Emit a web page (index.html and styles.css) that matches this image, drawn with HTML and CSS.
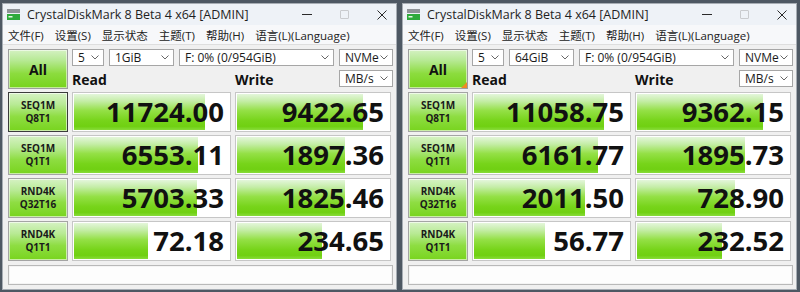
FILE: index.html
```html
<!DOCTYPE html>
<html>
<head>
<meta charset="utf-8">
<link rel="stylesheet" href="styles.css">
</head>
<body>
<div class="desktop">
  <div class="win">
    <div class="titlebar">
      <svg class="appicon" width="13" height="11" viewBox="0 0 13 11"><rect x="0" y="0" width="13" height="4" fill="#8f9398"/><rect x="0" y="5" width="13" height="6" fill="#2faa3c"/><rect x="1.5" y="7" width="4" height="1.5" fill="#e8f5e8"/></svg>
      <span class="title">CrystalDiskMark 8 Beta 4 x64 [ADMIN]</span>
      <div class="caption">
        <span class="cap-min"></span>
        <span class="cap-max"></span>
        <svg class="cap-close" width="10" height="10" viewBox="0 0 10 10"><path d="M0.5 0.5 L9.5 9.5 M9.5 0.5 L0.5 9.5" stroke="#2a2a2a" stroke-width="1"/></svg>
      </div>
    </div>
    <div class="menubar">
      <span>文件(F)</span><span>设置(S)</span><span>显示状态</span><span>主题(T)</span><span>帮助(H)</span><span>语言(L)(Language)</span>
    </div>
    <div class="content">
      <div class="head">
        <div class="all">All</div>
        <div class="controls">
          <div class="row1">
            <div class="sel w-cnt"><span>5</span><svg class="chev" width="8" height="5" viewBox="0 0 8 5"><path d="M0.5 0.5 L4 4 L7.5 0.5" fill="none" stroke="#666"/></svg></div>
            <div class="sel w-size"><span>1GiB</span><svg class="chev" width="8" height="5" viewBox="0 0 8 5"><path d="M0.5 0.5 L4 4 L7.5 0.5" fill="none" stroke="#666"/></svg></div>
            <div class="sel w-drive"><span>F: 0% (0/954GiB)</span><svg class="chev" width="8" height="5" viewBox="0 0 8 5"><path d="M0.5 0.5 L4 4 L7.5 0.5" fill="none" stroke="#666"/></svg></div>
            <div class="sel w-mode"><span>NVMe</span><svg class="chev" width="8" height="5" viewBox="0 0 8 5"><path d="M0.5 0.5 L4 4 L7.5 0.5" fill="none" stroke="#666"/></svg></div>
          </div>
          <div class="row2">
            <span class="lbl-read">Read</span>
            <span class="lbl-write">Write</span>
            <div class="sel w-mode"><span>MB/s</span><svg class="chev" width="8" height="5" viewBox="0 0 8 5"><path d="M0.5 0.5 L4 4 L7.5 0.5" fill="none" stroke="#666"/></svg></div>
          </div>
        </div>
      </div>
      <div class="trow">
        <div class="tbtn focus"><span>SEQ1M</span><span>Q8T1</span></div>
        <div class="cell"><div class="fill" style="width:84.49%"></div><div class="num">11724.00</div></div>
        <div class="cell"><div class="fill" style="width:82.90%"></div><div class="num">9422.65</div></div>
      </div>
      <div class="trow">
        <div class="tbtn"><span>SEQ1M</span><span>Q1T1</span></div>
        <div class="cell"><div class="fill" style="width:80.27%"></div><div class="num">6553.11</div></div>
        <div class="cell"><div class="fill" style="width:71.30%"></div><div class="num">1897.36</div></div>
      </div>
      <div class="trow">
        <div class="tbtn"><span>RND4K</span><span>Q32T16</span></div>
        <div class="cell"><div class="fill" style="width:79.27%"></div><div class="num">5703.33</div></div>
        <div class="cell"><div class="fill" style="width:71.02%"></div><div class="num">1825.46</div></div>
      </div>
      <div class="trow">
        <div class="tbtn"><span>RND4K</span><span>Q1T1</span></div>
        <div class="cell"><div class="fill" style="width:47.64%"></div><div class="num">72.18</div></div>
        <div class="cell"><div class="fill" style="width:56.17%"></div><div class="num">234.65</div></div>
      </div>
      <div class="status"></div>
    </div>
  </div>

  <div class="win">
    <div class="titlebar">
      <svg class="appicon" width="13" height="11" viewBox="0 0 13 11"><rect x="0" y="0" width="13" height="4" fill="#8f9398"/><rect x="0" y="5" width="13" height="6" fill="#2faa3c"/><rect x="1.5" y="7" width="4" height="1.5" fill="#e8f5e8"/></svg>
      <span class="title">CrystalDiskMark 8 Beta 4 x64 [ADMIN]</span>
      <div class="caption">
        <span class="cap-min"></span>
        <span class="cap-max"></span>
        <svg class="cap-close" width="10" height="10" viewBox="0 0 10 10"><path d="M0.5 0.5 L9.5 9.5 M9.5 0.5 L0.5 9.5" stroke="#2a2a2a" stroke-width="1"/></svg>
      </div>
    </div>
    <div class="menubar">
      <span>文件(F)</span><span>设置(S)</span><span>显示状态</span><span>主题(T)</span><span>帮助(H)</span><span>语言(L)(Language)</span>
    </div>
    <div class="content">
      <div class="head">
        <div class="all mark">All</div>
        <div class="controls">
          <div class="row1">
            <div class="sel w-cnt"><span>5</span><svg class="chev" width="8" height="5" viewBox="0 0 8 5"><path d="M0.5 0.5 L4 4 L7.5 0.5" fill="none" stroke="#666"/></svg></div>
            <div class="sel w-size"><span>64GiB</span><svg class="chev" width="8" height="5" viewBox="0 0 8 5"><path d="M0.5 0.5 L4 4 L7.5 0.5" fill="none" stroke="#666"/></svg></div>
            <div class="sel w-drive"><span>F: 0% (0/954GiB)</span><svg class="chev" width="8" height="5" viewBox="0 0 8 5"><path d="M0.5 0.5 L4 4 L7.5 0.5" fill="none" stroke="#666"/></svg></div>
            <div class="sel w-mode"><span>NVMe</span><svg class="chev" width="8" height="5" viewBox="0 0 8 5"><path d="M0.5 0.5 L4 4 L7.5 0.5" fill="none" stroke="#666"/></svg></div>
          </div>
          <div class="row2">
            <span class="lbl-read">Read</span>
            <span class="lbl-write">Write</span>
            <div class="sel w-mode"><span>MB/s</span><svg class="chev" width="8" height="5" viewBox="0 0 8 5"><path d="M0.5 0.5 L4 4 L7.5 0.5" fill="none" stroke="#666"/></svg></div>
          </div>
        </div>
      </div>
      <div class="trow">
        <div class="tbtn"><span>SEQ1M</span><span>Q8T1</span></div>
        <div class="cell"><div class="fill" style="width:84.06%"></div><div class="num">11058.75</div></div>
        <div class="cell"><div class="fill" style="width:82.86%"></div><div class="num">9362.15</div></div>
      </div>
      <div class="trow">
        <div class="tbtn"><span>SEQ1M</span><span>Q1T1</span></div>
        <div class="cell"><div class="fill" style="width:79.83%"></div><div class="num">6161.77</div></div>
        <div class="cell"><div class="fill" style="width:71.30%"></div><div class="num">1895.73</div></div>
      </div>
      <div class="trow">
        <div class="tbtn"><span>RND4K</span><span>Q32T16</span></div>
        <div class="cell"><div class="fill" style="width:71.73%"></div><div class="num">2011.50</div></div>
        <div class="cell"><div class="fill" style="width:64.38%"></div><div class="num">728.90</div></div>
      </div>
      <div class="trow">
        <div class="tbtn"><span>RND4K</span><span>Q1T1</span></div>
        <div class="cell"><div class="fill" style="width:45.90%"></div><div class="num">56.77</div></div>
        <div class="cell"><div class="fill" style="width:56.11%"></div><div class="num">232.52</div></div>
      </div>
      <div class="status"></div>
    </div>
  </div>
</div>
</body>
</html>
```
FILE: styles.css
```css
* { box-sizing: border-box; }
html, body { margin: 0; padding: 0; }
body {
  width: 800px;
  height: 292px;
  overflow: hidden;
  background: #4e5863;
  font-family: "Open Sans", "Noto Sans CJK SC", sans-serif;
  color: #1a1a1a;
}
.desktop {
  display: flex;
  gap: 5px;
  padding: 3px 0 0 2px;
  height: 292px;
}
.win {
  width: 395px;
  height: 287px;
  background: #f0f0f0;
  border: 1px solid #a7adb4;
  display: flex;
  flex-direction: column;
}
.titlebar {
  height: 21px;
  flex: none;
  background: #eef2f7;
  display: flex;
  align-items: center;
  padding-left: 4px;
}
.appicon { flex: none; }
.title {
  margin-left: 7px;
  font-size: 12.5px;
  color: #1f1f1f;
  white-space: nowrap;
}
.caption {
  margin-left: auto;
  display: flex;
  align-items: center;
  gap: 28px;
  margin-right: 9px;
}
.cap-min { width: 10px; height: 1px; background: #2a2a2a; }
.cap-max { width: 9px; height: 9px; border: 1px solid #c9cbce; border-radius: 1px; }
.cap-close { display: block; }
.menubar {
  height: 20px;
  flex: none;
  background: #f7f8fa;
  border-bottom: 1px solid #dedede;
  display: flex;
  align-items: center;
  gap: 11px;
  padding-left: 5px;
  font-size: 11.5px;
  color: #222;
  white-space: nowrap;
}
.content {
  padding: 4px 3px 0 5px;
  display: flex;
  flex-direction: column;
  gap: 3px;
}
.head {
  display: grid;
  grid-template-columns: 60px 1fr;
  column-gap: 4px;
  height: 40px;
}
.all {
  position: relative;
  border: 1px solid #9e9e9e;
  box-shadow: inset 0 0 0 1px rgba(255,255,255,0.55);
  background: linear-gradient(#d4f1c2 0%, #b6e993 28%, #8cdc3e 62%, #77d31c 100%);
  display: flex;
  align-items: center;
  justify-content: center;
  font-weight: 700;
  font-size: 14px;
  color: #111;
}
.all.mark::after {
  content: "";
  position: absolute;
  right: 0;
  bottom: 0;
  width: 0;
  height: 0;
  border-left: 6px solid transparent;
  border-bottom: 6px solid #f08a24;
}
.controls {
  display: grid;
  grid-template-rows: 17px 17px;
  row-gap: 4px;
}
.row1 { display: flex; gap: 5px; }
.row2 { display: flex; align-items: center; }
.lbl-read, .lbl-write {
  font-weight: 700;
  font-size: 14px;
  color: #111;
  line-height: 17px;
  padding-top: 2px;
}
.lbl-read { width: 163px; }
.lbl-write { flex: 1; }
.sel {
  height: 17px;
  background: #fff;
  border: 1px solid #a6a6a6;
  display: flex;
  align-items: center;
  justify-content: space-between;
  padding: 0 4px 0 5px;
  font-size: 12px;
  color: #1a1a1a;
  white-space: nowrap;
}
.chev { flex: none; }
.w-cnt { width: 32px; }
.w-size { width: 65px; }
.w-drive { width: 155px; }
.w-mode { width: 54px; }
.trow {
  display: grid;
  grid-template-columns: 60px 159px 156px;
  column-gap: 4px;
  height: 40px;
}
.tbtn {
  border: 1px solid #a4a4a4;
  box-shadow: inset 0 0 0 1px rgba(255,255,255,0.6);
  background: linear-gradient(#d6f2c4 0%, #b8ea95 30%, #8edd42 62%, #78d41e 100%);
  display: flex;
  flex-direction: column;
  align-items: center;
  justify-content: center;
  font-weight: 700;
  font-size: 10px;
  color: #1a1a1a;
}
.tbtn span {
  display: block;
  line-height: 13.5px;
  height: 13.5px;
}
.tbtn.focus { border-color: #3c3c3c; }
.cell {
  border: 1px solid #c6c6c6;
  background: #fff;
  padding: 1px;
  display: grid;
}
.fill, .num { grid-area: 1 / 1; }
.fill {
  height: 100%;
  background: linear-gradient(#e4f6db 0%, #c4eda6 20%, #94e046 46%, #77d41a 74%, #70d012 90%, #88dc3a 100%);
}
.num {
  justify-self: end;
  align-self: center;
  font-weight: 700;
  font-size: 27.5px;
  line-height: 1;
  color: #111;
  padding-right: 5px;
  position: relative;
}
.status {
  margin-top: 1px;
  height: 20px;
  width: 385px;
  background: #fdfdfd;
  border: 1px solid #b9b9b9;
  box-shadow: inset 0 0 0 1px #f4f4f4;
}
```
